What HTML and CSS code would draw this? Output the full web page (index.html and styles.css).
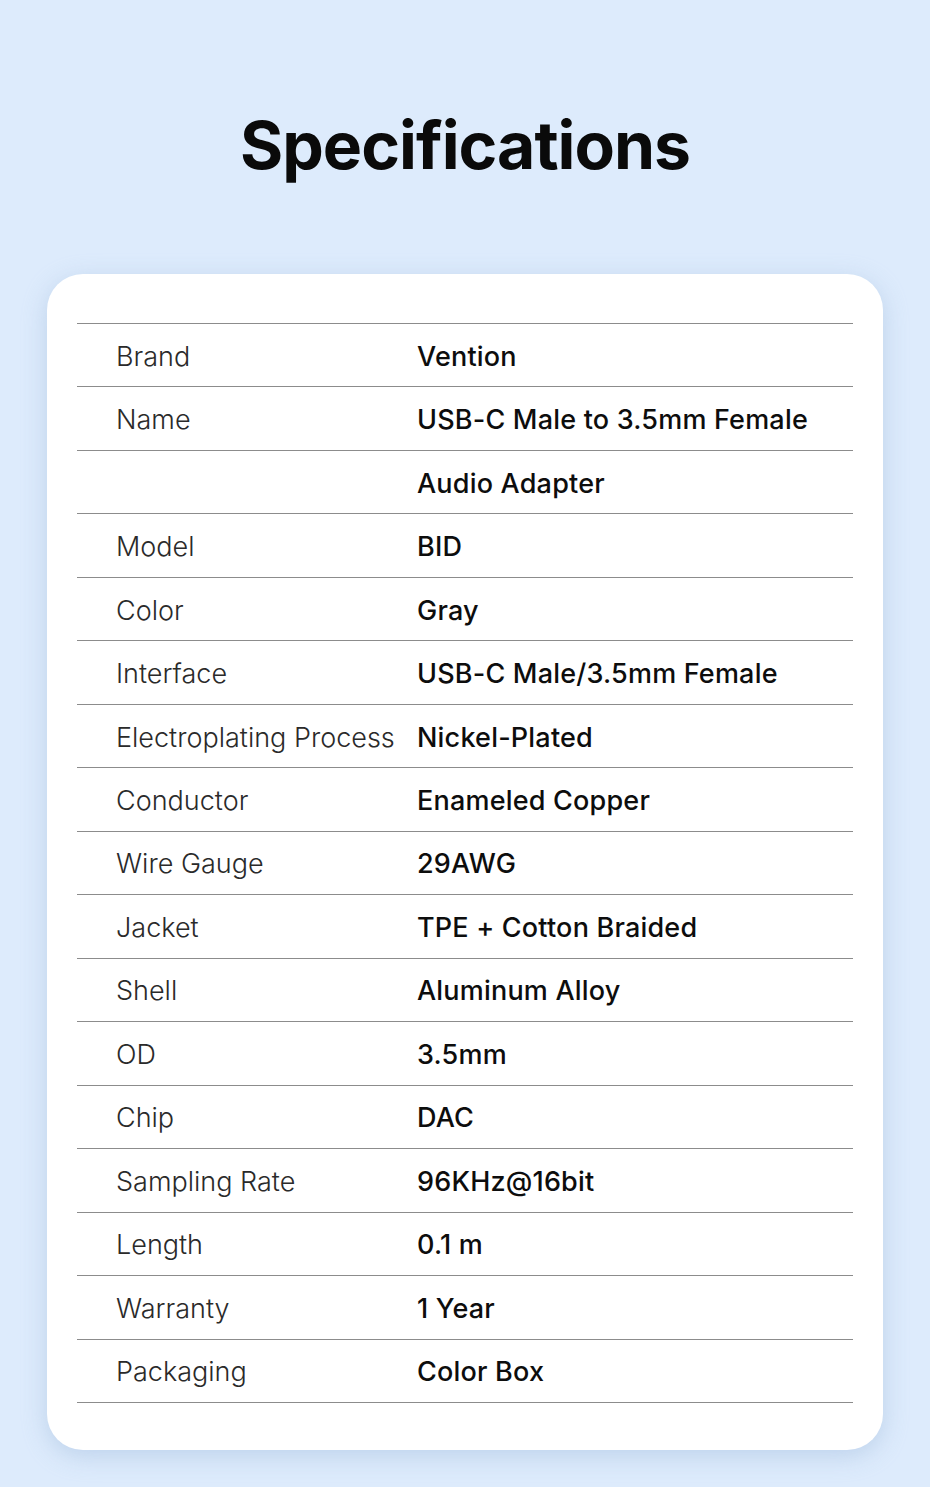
FILE: index.html
```html
<!DOCTYPE html>
<html>
<head>
<meta charset="utf-8">
<link rel="stylesheet" href="styles.css">
</head>
<body>
<div class="page">
  <h1 class="title">Specifications</h1>
  <div class="card">
    <div class="table">
      <div class="row"><span class="label">Brand</span><span class="value">Vention</span></div>
      <div class="row"><span class="label">Name</span><span class="value">USB-C Male to 3.5mm Female</span></div>
      <div class="row"><span class="label"></span><span class="value">Audio Adapter</span></div>
      <div class="row"><span class="label">Model</span><span class="value">BID</span></div>
      <div class="row"><span class="label">Color</span><span class="value">Gray</span></div>
      <div class="row"><span class="label">Interface</span><span class="value">USB-C Male/3.5mm Female</span></div>
      <div class="row"><span class="label">Electroplating Process</span><span class="value">Nickel-Plated</span></div>
      <div class="row"><span class="label">Conductor</span><span class="value">Enameled Copper</span></div>
      <div class="row"><span class="label">Wire Gauge</span><span class="value">29AWG</span></div>
      <div class="row"><span class="label">Jacket</span><span class="value">TPE + Cotton Braided</span></div>
      <div class="row"><span class="label">Shell</span><span class="value">Aluminum Alloy</span></div>
      <div class="row"><span class="label">OD</span><span class="value">3.5mm</span></div>
      <div class="row"><span class="label">Chip</span><span class="value">DAC</span></div>
      <div class="row"><span class="label">Sampling Rate</span><span class="value">96KHz@16bit</span></div>
      <div class="row"><span class="label">Length</span><span class="value">0.1 m</span></div>
      <div class="row"><span class="label">Warranty</span><span class="value">1 Year</span></div>
      <div class="row"><span class="label">Packaging</span><span class="value">Color Box</span></div>
    </div>
  </div>
</div>
</body>
</html>
```

FILE: styles.css
```css
html, body {
  margin: 0;
  padding: 0;
}
body {
  background: #ddebfc;
  font-family: Inter, "Noto Sans", sans-serif;
}
.page {
  width: 930px;
  height: 1487px;
  box-sizing: border-box;
  padding-top: 100px;
  display: flex;
  flex-direction: column;
  align-items: center;
}
.title {
  margin: 0;
  height: 174px;
  font-size: 66px;
  line-height: 90px;
  font-weight: 700;
  color: #0a0a0a;
  letter-spacing: -1px;
}
.card {
  width: 836px;
  box-sizing: border-box;
  background: #ffffff;
  border-radius: 36px;
  padding: 49px 30px 47px;
  box-shadow: 0 6px 24px rgba(150, 180, 215, 0.45);
}
.table {
  border-top: 1px solid #8c8c8c;
}
.row {
  display: grid;
  grid-template-columns: 340px 1fr;
  height: 63.47px;
  box-sizing: border-box;
  border-bottom: 1px solid #8c8c8c;
  align-items: center;
}
.label {
  padding-left: 39px;
  font-size: 27px;
  font-weight: 300;
  color: #2a2a2a;
  white-space: nowrap;
  padding-top: 2px;
}
.value {
  font-size: 27px;
  font-weight: 500;
  color: #0d0d0d;
  white-space: nowrap;
  letter-spacing: 0.2px;
  padding-top: 2px;
}
```
